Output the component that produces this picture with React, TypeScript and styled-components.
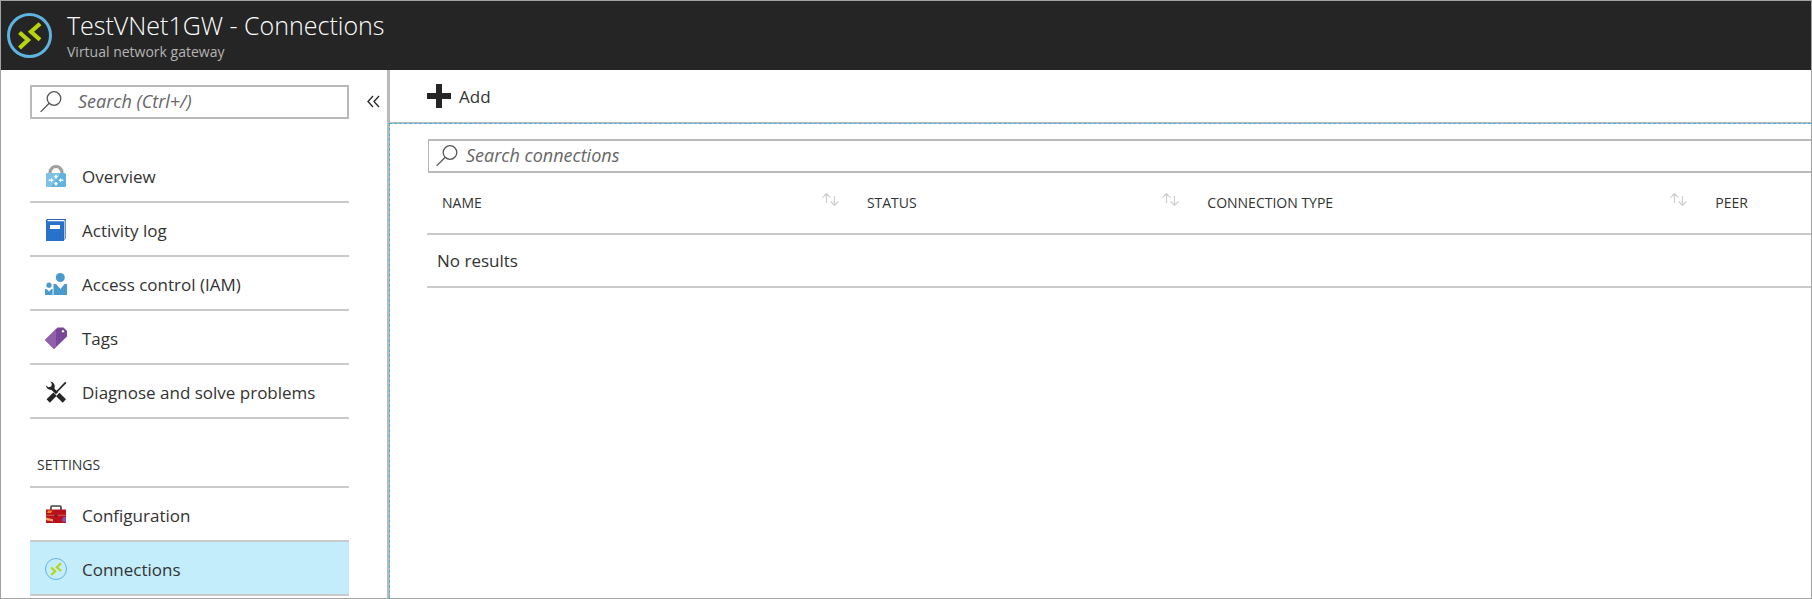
import React from "react";
import styled, { createGlobalStyle } from "styled-components";

const GlobalStyle = createGlobalStyle`
  * { box-sizing: border-box; }
  body {
    margin: 0;
    background: #fff;
    color: #333;
    font-family: "Segoe UI", "Open Sans", "Noto Sans", sans-serif;
    font-size: 17px;
    line-height: 24px;
  }
  button, input { font: inherit; color: inherit; }
`;

const Frame = styled.div`
  display: flex;
  flex-direction: column;
  min-height: 100vh;
  border: 1px solid #a2a2a2;
  overflow: hidden;
`;

const Header = styled.header`
  display: flex;
  align-items: center;
  gap: 15px;
  height: 69px;
  padding: 0 6px;
  background: #252525;
`;

const HeaderText = styled.div`
  display: flex;
  flex-direction: column;
  padding-bottom: 3px;
`;

const Title = styled.h1`
  margin: 0;
  color: #fff;
  font-size: 25px;
  font-weight: 300;
  line-height: 34px;
`;

const Subtitle = styled.p`
  margin: 0;
  color: #b4b4b4;
  font-size: 14px;
  line-height: 19px;
`;

const Body = styled.div`
  display: flex;
  flex: 1;
`;

const Sidebar = styled.aside`
  flex: none;
  width: 388px;
  padding: 15px 7px 0 29px;
  border-right: 2px solid #b9b9b9;
`;

const SidebarTop = styled.div`
  display: flex;
  align-items: center;
  justify-content: space-between;
`;

const SearchBox = styled.label<{ $open?: boolean; $gap: number }>`
  display: flex;
  align-items: center;
  gap: ${(p) => p.$gap}px;
  width: ${(p) => (p.$open ? "auto" : "319px")};
  height: 34px;
  padding: 0 8px;
  border: 2px solid #b9b9b9;
  ${(p) => p.$open && "border-left-width: 1px; border-right: 0; margin-left: 1px; padding-left: 7px;"}
`;

const SearchInput = styled.input`
  flex: 1;
  min-width: 0;
  height: 26px;
  padding: 0 0 2px;
  border: 0;
  outline: 0;
  background: none;
  font-size: 18px;
  font-style: italic;
  &::placeholder { color: #666; opacity: 1; }
`;

const CollapseButton = styled.button`
  display: flex;
  padding: 0;
  border: 0;
  background: none;
`;

const NavList = styled.ul`
  margin: 0;
  padding: 0;
  width: 319px;
  list-style: none;
`;

const MainNav = styled(NavList)`
  margin-top: 30px;
`;

const SettingsNav = styled(NavList)`
  border-top: 2px solid #cacaca;
`;

const NavLink = styled.a<{ $selected?: boolean }>`
  display: flex;
  align-items: center;
  gap: 15px;
  height: 54px;
  padding: 2px 15px 0;
  border-bottom: 2px solid #cacaca;
  background: ${(p) => (p.$selected ? "#c4edfc" : "transparent")};
  color: inherit;
  text-decoration: none;
`;

const Label = styled.span`
  padding-top: 2px;
`;

const SectionLabel = styled.h2`
  margin: 0;
  padding: 34px 7px 9px;
  font-size: 14px;
  font-weight: 400;
  line-height: 24px;
`;

const Main = styled.main`
  display: flex;
  flex: 1;
  flex-direction: column;
  min-width: 0;
`;

const Toolbar = styled.div`
  display: flex;
  align-items: center;
  height: 53px;
  padding-left: 37px;
  border-left: 1px solid #b9b9b9;
  border-bottom: 1px solid #b9b9b9;
`;

const ToolButton = styled.button`
  display: flex;
  align-items: center;
  gap: 8px;
  padding: 0;
  border: 0;
  background: none;
`;

const Content = styled.section`
  flex: 1;
  padding: 15px 0 0 37px;
  border: 1px dashed #3fb4e6;
  border-width: 1px 0 0 1px;
  background:
    linear-gradient(#fff, #fff) padding-box,
    linear-gradient(#c4b8b2, #c4b8b2) border-box;
`;

const Table = styled.table`
  width: 100%;
  table-layout: fixed;
  border-collapse: separate;
  border-spacing: 0;
`;

const HeadCell = styled.th<{ $width?: string }>`
  width: ${(p) => p.$width ?? "auto"};
  height: 62px;
  padding: 0 13px 0 15px;
  border-bottom: 2px solid #cacaca;
  font-size: 14px;
  font-weight: 400;
  text-align: left;
`;

const HeadContent = styled.div`
  display: flex;
  justify-content: space-between;
  white-space: nowrap;
`;

const SortButton = styled.button`
  display: flex;
  padding: 2px 0 0;
  border: 0;
  background: none;
`;

const EmptyCell = styled.td`
  height: 53px;
  padding: 0 10px;
  border-bottom: 2px solid #cacaca;
`;

const ConnectionIcon = ({ size, stroke }: { size: number; stroke: number }) => (
  <svg width={size} height={size} viewBox="0 0 45 45" fill="none" aria-hidden="true">
    <circle cx="22.5" cy="22.5" r={22.5 - stroke / 2} stroke="#5eb3df" strokeWidth={stroke} />
    <path d="M12.500 19.500l8.500 7.500-8.500 8M33 10.800l-9 8 9 8" stroke="#b8d40f" strokeWidth="4.200" />
  </svg>
);

const MagnifierIcon = () => (
  <svg width="22" height="22" viewBox="0 0 22 22" fill="none" stroke="#555" strokeWidth="1.300" aria-hidden="true">
    <circle cx="14" cy="7.500" r="6.800" />
    <path d="M9.200 12.300L.6 20.900" />
  </svg>
);

const CollapseIcon = () => (
  <svg width="13" height="14" viewBox="0 0 13 14" fill="none" stroke="#252525" strokeWidth="1.300" aria-hidden="true">
    <path d="M6 1L1 6.500l5 5.500M12 1L7 6.500l5 5.500" />
  </svg>
);

const PlusIcon = () => (
  <svg width="24" height="24" viewBox="0 0 24 24" fill="#252525" aria-hidden="true">
    <path d="M9 0h6v9h9v6h-9v9H9v-9H0V9h9z" />
  </svg>
);

const SortIcon = () => (
  <svg width="17" height="13" viewBox="0 0 17 13" fill="none" stroke="#cfcfcf" strokeWidth="1.200" aria-hidden="true">
    <path d="M4.500 10V.8M.5 4.600l4-4 4 4M12.500 3v9.200M8.700 8.500l3.800 3.800 4-3.800" />
  </svg>
);

const LockIcon = () => (
  <svg width="22" height="22" viewBox="0 0 22 22" aria-hidden="true">
    <path d="M5 9V7.500a6 6 0 0 1 12 0V9" fill="none" stroke="#a0a0a0" strokeWidth="3.200" />
    <rect x="1" y="8" width="20" height="14" rx="1.500" fill="#5eb4dc" />
    <path d="M2.500 8H16L6 22H2.500A1.500 1.500 0 0 1 1 20.500v-11A1.500 1.500 0 0 1 2.500 8z" fill="#7fc3e4" />
    <path
      d="M11 9.500l2.300 2.700h-1.500v1.300h-1.600v-1.300H8.700zM11 21l2.300-2.700h-1.500V17h-1.600v1.300H8.700zM8.500 15.200L6 12.900v1.500H3.700V16H6v1.500zM13.500 15.200l2.500-2.300v1.500h2.300V16H16v1.500z"
      fill="#fff"
    />
  </svg>
);

const BookIcon = () => (
  <svg width="22" height="22" viewBox="0 0 22 22" aria-hidden="true">
    <path d="M2 0h19v19l-2.500 3H1V1z" fill="#2a62b4" />
    <path d="M2.500 1h17v1.500h-17z" fill="#fff" />
    <path d="M19 2l1.500-1v18L19 21z" fill="#b9c3d0" />
    <path d="M1 2.500h17.500V22H1z" fill="#2872cc" />
    <path d="M5 6h10v4H5z" fill="#fff" />
  </svg>
);

const PeopleIcon = () => (
  <svg width="22" height="22" viewBox="0 0 22 22" fill="#4a9acb" aria-hidden="true">
    <circle cx="15.300" cy="4.500" r="4.500" />
    <path d="M8.500 11H11l4.500 5 4-5H22v11H8.500z" />
    <circle cx="4" cy="12.200" r="2.600" />
    <path d="M0 16h1.500L4 18.500 6.500 16H8v6H0z" />
    <path d="M7.300 16H8v6h-.7z" fill="#a4cde5" />
  </svg>
);

const TagIcon = () => (
  <svg width="22" height="22" viewBox="0 0 22 22" aria-hidden="true">
    <path d="M0 13L12.500.6h6L22 4v5.500L9 22z" fill="#7b479a" />
    <path d="M0 13L11 2v18l-2 2z" fill="#9160ab" />
    <circle cx="18" cy="4.300" r="1.700" fill="#fff" stroke="#5b3575" strokeWidth=".8" />
  </svg>
);

const ToolsIcon = () => (
  <svg width="22" height="22" viewBox="0 0 22 22" fill="none" stroke="#252525" aria-hidden="true">
    <path d="M20.800 1.300L11.500 11" strokeWidth="1.800" />
    <path d="M10 13.200L3.200 20" strokeWidth="4.600" />
    <path d="M6.500 7L12 12.200" strokeWidth="3" />
    <path d="M12.800 13.500L19.300 20" strokeWidth="4.600" />
    <path d="M5.200.4a5.300 5.300 0 0 1 4.200 7.400 5.300 5.300 0 0 1-8.500-3.300l2.600 1.700 2.700-.6.700-2.500z" fill="#252525" stroke="none" />
  </svg>
);

const ToolboxIcon = () => (
  <svg width="22" height="22" viewBox="0 0 22 22" aria-hidden="true">
    <path d="M6 6V3.200A1.200 1.200 0 0 1 7.200 2h7.600A1.200 1.200 0 0 1 16 3.200V6" fill="none" stroke="#444" strokeWidth="1.700" />
    <path d="M1 5.500h20V19H1z" fill="#b5121b" />
    <path d="M1 10.800h20v.9H1z" fill="#d9685f" />
    <path d="M9.500 10.500h3v2h-3z" fill="#7a1a1a" />
    <path d="M3 6.500h4.500L6 9H2z" fill="#f58220" />
    <path d="M1 13.500l7 1.700v2.300l-7-1.300z" fill="#f3a36a" />
    <path d="M21 13v5h-2.200a2.600 2.600 0 0 1 2.200-5z" fill="#8a4fb0" />
  </svg>
);

const mainItems = [
  { label: "Overview", icon: <LockIcon /> },
  { label: "Activity log", icon: <BookIcon /> },
  { label: "Access control (IAM)", icon: <PeopleIcon /> },
  { label: "Tags", icon: <TagIcon /> },
  { label: "Diagnose and solve problems", icon: <ToolsIcon /> },
];

const settingsItems = [
  { label: "Configuration", icon: <ToolboxIcon /> },
  { label: "Connections", icon: <ConnectionIcon size={22} stroke={2} />, selected: true },
];

const columns = [
  { label: "NAME", width: "30.7%", sortable: true },
  { label: "STATUS", width: "24.6%", sortable: true },
  { label: "CONNECTION TYPE", width: "36.7%", sortable: true },
  { label: "PEER" },
];

export default function App() {
  return (
    <Frame>
      <GlobalStyle />
      <Header>
        <ConnectionIcon size={45} stroke={3} />
        <HeaderText>
          <Title>TestVNet1GW - Connections</Title>
          <Subtitle>Virtual network gateway</Subtitle>
        </HeaderText>
      </Header>
      <Body>
        <Sidebar>
          <SidebarTop>
            <SearchBox $gap={16}>
              <MagnifierIcon />
              <SearchInput type="text" placeholder="Search (Ctrl+/)" aria-label="Search menu" />
            </SearchBox>
            <CollapseButton type="button" aria-label="Collapse menu">
              <CollapseIcon />
            </CollapseButton>
          </SidebarTop>
          <nav>
            <MainNav>
              {mainItems.map((item) => (
                <li key={item.label}>
                  <NavLink href="#">
                    {item.icon}
                    <Label>{item.label}</Label>
                  </NavLink>
                </li>
              ))}
            </MainNav>
            <SectionLabel>SETTINGS</SectionLabel>
            <SettingsNav>
              {settingsItems.map((item) => (
                <li key={item.label}>
                  <NavLink href="#" $selected={item.selected}>
                    {item.icon}
                    <Label>{item.label}</Label>
                  </NavLink>
                </li>
              ))}
            </SettingsNav>
          </nav>
        </Sidebar>
        <Main>
          <Toolbar>
            <ToolButton type="button">
              <PlusIcon />
              <Label>Add</Label>
            </ToolButton>
          </Toolbar>
          <Content>
            <SearchBox $open $gap={8}>
              <MagnifierIcon />
              <SearchInput type="text" placeholder="Search connections" aria-label="Search connections" />
            </SearchBox>
            <Table>
              <thead>
                <tr>
                  {columns.map((column) => (
                    <HeadCell key={column.label} $width={column.width} scope="col">
                      <HeadContent>
                        {column.label}
                        {column.sortable && (
                          <SortButton type="button" aria-label={`Sort by ${column.label}`}>
                            <SortIcon />
                          </SortButton>
                        )}
                      </HeadContent>
                    </HeadCell>
                  ))}
                </tr>
              </thead>
              <tbody>
                <tr>
                  <EmptyCell colSpan={columns.length}>No results</EmptyCell>
                </tr>
              </tbody>
            </Table>
          </Content>
        </Main>
      </Body>
    </Frame>
  );
}
